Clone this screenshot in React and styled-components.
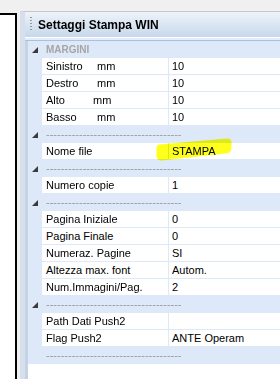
import React from 'react'
import styled, { createGlobalStyle } from 'styled-components'

const GlobalStyle = createGlobalStyle`
  html, body {
    margin: 0;
    padding: 0;
    background: #f0f0f0;
  }
  body {
    font-family: "Liberation Sans", Arial, sans-serif;
  }
`

const Page = styled.div`
  display: flex;
  height: 379px;
  overflow: hidden;
`

const LeftPane = styled.div`
  flex-shrink: 0;
  width: 15px;
  margin: 13px 3px 0 0;
  background: #fff;
  border-top: 2px solid #000;
  border-right: 2px solid #000;
`

const Frame = styled.div`
  flex: 1;
  min-width: 0;
  margin-top: 11px;
  display: flex;
  flex-direction: column;
  border-top: 1px solid #c6c6c6;
  border-left: 5px solid #d6dfeb;
`

const Header = styled.div`
  height: 25px;
  display: flex;
  align-items: center;
  gap: 6px;
  padding-left: 5px;
  background: linear-gradient(#eef3f9, #c7d8eb);
`

const Grip = styled.div`
  width: 2px;
  height: 15px;
  background: repeating-linear-gradient(to bottom, #8f98a4 0 1px, transparent 1px 3px);
`

const Title = styled.div`
  font-size: 12px;
  font-weight: bold;
  color: #000;
  white-space: nowrap;
`

const HeaderRule = styled.div`
  height: 2px;
  border-top: 1px solid #fff;
  border-bottom: 1px solid #a9c0de;
  background: #e3ecf8;
`

const Body = styled.div`
  flex: 1;
  display: flex;
  flex-direction: column;
  border-left: 3px solid #c5d3e5;
  background: #fff;
`

const Rows = styled.div`
  background: #dde9f8;
`

const Row = styled.div`
  position: relative;
  display: flex;
  height: ${p => (p.$category ? '17px' : '16px')};
  margin-bottom: ${p => (p.$category ? '0' : '1px')};
  font-size: 11px;
  line-height: ${p => (p.$category ? '17px' : '16px')};
`

const Gutter = styled.div`
  flex-shrink: 0;
  width: 14px;
  display: flex;
  align-items: center;
  justify-content: center;
`

const CategoryName = styled.div`
  padding-left: 4px;
  white-space: nowrap;
  overflow: hidden;
  color: ${p => (p.$dashes ? '#9a9a9a' : '#a6a6a6')};
  font-size: ${p => (p.$dashes ? '11px' : '10px')};
  font-weight: ${p => (p.$dashes ? 'normal' : 'bold')};
`

const Label = styled.div`
  flex-shrink: 0;
  box-sizing: border-box;
  width: 126px;
  padding-left: 4px;
  background: #fff;
  color: #000;
  white-space: nowrap;
  overflow: hidden;
`

const LabelName = styled.span`
  display: inline-block;
  width: ${p => p.$w}px;
`

const Value = styled.div`
  flex: 1;
  margin-left: 1px;
  padding-left: 3px;
  background: #fff;
  color: #000;
  white-space: nowrap;
`

const Highlight = styled.svg`
  position: absolute;
  left: 128px;
  top: -5px;
  width: 76px;
  height: 23px;
  mix-blend-mode: multiply;
  pointer-events: none;
`

const Triangle = () => (
  <svg width="6" height="6" viewBox="0 0 6 6">
    <polygon points="6,0 6,6 0,6" fill="#3a3a3a" />
  </svg>
)

const DASHES = '-------------------------------------'

const Category = ({ name, open = true }) => (
  <Row $category>
    <Gutter>{open && <Triangle />}</Gutter>
    <CategoryName $dashes={!name}>{name || DASHES}</CategoryName>
  </Row>
)

const Item = ({ label, unit, w, value, children }) => (
  <Row>
    <Gutter />
    <Label>
      {unit ? (
        <>
          <LabelName $w={w}>{label}</LabelName>mm
        </>
      ) : (
        label
      )}
    </Label>
    <Value>{value}</Value>
    {children}
  </Row>
)

export default function App() {
  return (
    <Page>
      <GlobalStyle />
      <LeftPane />
      <Frame>
        <Header>
          <Grip />
          <Title>Settaggi Stampa WIN</Title>
        </Header>
        <HeaderRule />
        <Body>
          <Rows>
            <Category name="MARGINI" />
            <Item label="Sinistro" unit w={51} value="10" />
            <Item label="Destro" unit w={51} value="10" />
            <Item label="Alto" unit w={47} value="10" />
            <Item label="Basso" unit w={51} value="10" />
            <Category />
            <Item label="Nome file" value="STAMPA">
              <Highlight viewBox="0 0 76 23">
                <path
                  d="M3 6.5 L71 0.6 Q75.5 0.4 75.6 5 L75.2 11.5 Q74.8 14.8 71 15.2 L6 22.4 Q1 22.8 0.6 18.5 L0.5 10.5 Q0.6 6.8 3 6.5 Z"
                  fill="#ffff1e"
                />
              </Highlight>
            </Item>
            <Category />
            <Item label="Numero copie" value="1" />
            <Category />
            <Item label="Pagina Iniziale" value="0" />
            <Item label="Pagina Finale" value="0" />
            <Item label="Numeraz. Pagine" value="SI" />
            <Item label="Altezza max. font" value="Autom." />
            <Item label="Num.Immagini/Pag." value="2" />
            <Category />
            <Item label="Path Dati Push2" value="" />
            <Item label="Flag Push2" value="ANTE Operam" />
            <Category open={false} />
          </Rows>
        </Body>
      </Frame>
    </Page>
  )
}
